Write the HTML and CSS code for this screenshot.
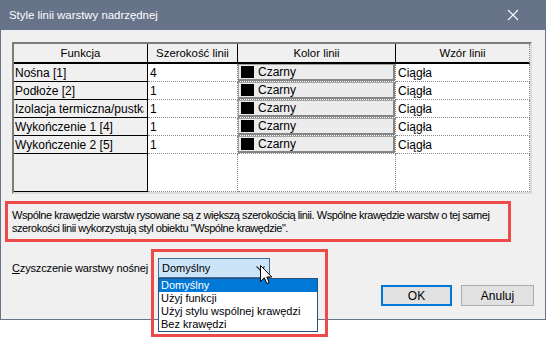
FILE: index.html
```html
<!DOCTYPE html>
<html lang="pl">
<head>
    <meta charset="UTF-8">
    <title>Style linii warstwy nadrzędnej</title>
    <link rel="stylesheet" href="styles.css">
</head>
<body>
	<div class="dialog">
		<div class="titlebar">
			<span class="title">Style linii warstwy nadrzędnej</span>
			<svg class="close" width="12" height="12" viewBox="0 0 12 12"><path d="M1 1 L11 11 M11 1 L1 11" stroke="#fff" stroke-width="1.1" fill="none"/></svg>
		</div>
		<div class="content">
			<div class="frame">
				<table class="layers">
					<thead>
						<tr><th class="c1">Funkcja</th><th class="c2">Szerokość linii</th><th class="c3">Kolor linii</th><th class="c4">Wzór linii</th></tr>
					</thead>
					<tbody>
						<tr><td class="fn"><div class="cut">Nośna [1]</div></td><td>4</td><td class="color"><div class="pick"><i class="swatch"></i>Czarny</div></td><td>Ciągła</td></tr>
						<tr><td class="fn"><div class="cut">Podłoże [2]</div></td><td>1</td><td class="color"><div class="pick"><i class="swatch"></i>Czarny</div></td><td>Ciągła</td></tr>
						<tr><td class="fn"><div class="cut">Izolacja termiczna/pustka [3]</div></td><td>1</td><td class="color"><div class="pick"><i class="swatch"></i>Czarny</div></td><td>Ciągła</td></tr>
						<tr><td class="fn"><div class="cut">Wykończenie 1 [4]</div></td><td>1</td><td class="color"><div class="pick"><i class="swatch"></i>Czarny</div></td><td>Ciągła</td></tr>
						<tr><td class="fn"><div class="cut">Wykończenie 2 [5]</div></td><td>1</td><td class="color"><div class="pick"><i class="swatch"></i>Czarny</div></td><td>Ciągła</td></tr>
						<tr class="filler"><td class="fn"></td><td></td><td></td><td></td></tr>
					</tbody>
				</table>
			</div>
			<div class="note">Wspólne krawędzie warstw rysowane są z większą szerokością linii. Wspólne krawędzie warstw o tej samej<br>szerokości linii wykorzystują styl obiektu "Wspólne krawędzie".</div>
			<div class="cleanup">
				<label><u>C</u>zyszczenie warstwy nośnej</label>
				<div class="combo">
					<div class="combo-box">
						<span>Domyślny</span>
						<svg class="chevron" width="9" height="6" viewBox="0 0 9 6"><path d="M0.5 0.5 L4.5 4.5 L8.5 0.5" stroke="#333" stroke-width="1.2" fill="none"/></svg>
					</div>
					<ul class="combo-list">
						<li class="active">Domyślny</li>
						<li>Użyj funkcji</li>
						<li>Użyj stylu wspólnej krawędzi</li>
						<li>Bez krawędzi</li>
					</ul>
					<div class="mark"></div>
					<svg class="cursor" width="13" height="20" viewBox="0 0 13 20"><path d="M0.5 0.5 L0.5 16.5 L4.3 12.8 L6.8 18.6 L9.2 17.6 L6.8 12 L11.8 12 Z" fill="#fff" stroke="#000" stroke-width="1" stroke-linejoin="miter"/></svg>
				</div>
			</div>
			<div class="actions">
				<button class="btn default">OK</button>
				<button class="btn">Anuluj</button>
			</div>
		</div>
	</div>
</body>
</html>
```

FILE: styles.css
```css
html {
	background: #fff;
}
body {
	margin: 0;
	min-height: 339px;
	background: #fff;
	font-family: "Liberation Sans", Arial, sans-serif;
	font-size: 12px;
	color: #000;
}
.dialog {
	width: 546px;
	height: 320px;
	box-sizing: border-box;
	background: #f0f0f0;
	border: 1px solid #667389;
	border-top: 0;
}
.titlebar {
	height: 30px;
	margin: 0 -1px;
	padding: 0 30px 0 9px;
	background: #667389;
	color: #fff;
	display: flex;
	align-items: center;
	justify-content: space-between;
}
.title {
	font-size: 11.4px;
}
.close {
	margin-right: -3px;
}
.content {
	padding: 12px 11px 0 11px;
}
.frame {
	width: 520px;
	height: 152px;
	box-sizing: border-box;
	border-top: 2px solid #7c7c7c;
	border-left: 2px solid #7c7c7c;
	border-right: 2px solid #dcdcdc;
	border-bottom: 2px solid #dcdcdc;
	background: #fff;
}
.layers {
	width: 516px;
	table-layout: fixed;
	border-collapse: separate;
	border-spacing: 0;
}
.layers th,
.layers td {
	box-sizing: border-box;
	padding: 0 2px;
	white-space: nowrap;
	overflow: hidden;
	text-align: left;
}
.layers th {
	height: 20px;
	font-size: 11.4px;
	font-weight: normal;
	text-align: center;
	background: #f0f0f0;
	border-right: 1px solid #000;
	border-bottom: 2px solid #000;
}
.layers th.c4 {
	border-right: 1px dotted #8a8a8a;
}
.c1 { width: 134px; }
.c2 { width: 90px; }
.c3 { width: 158px; }
.c4 { width: 134px; }
.layers td {
	height: 18px;
	background: #fff;
	border-right: 1px dotted #8a8a8a;
	border-bottom: 1px dotted #8a8a8a;
}
.layers td.fn {
	padding: 0 0 0 1px;
	background: #f0f0f0;
	border-right: 1px solid #000;
	border-bottom: 1px solid #000;
}
.cut {
	width: 129px;
	overflow: hidden;
}
.layers td.color {
	padding: 0;
}
.layers .filler td {
	height: 38px;
}
.pick {
	height: 17px;
	box-sizing: border-box;
	display: flex;
	align-items: center;
	padding-left: 2px;
	background: #ececec;
	border: 1px solid #a3a3a3;
	border-right: 2px solid #858585;
	border-bottom: 2px solid #858585;
}
.swatch {
	width: 13px;
	height: 12px;
	background: #000;
	margin-right: 4px;
}
.note {
	width: 506px;
	margin: 7px 0 0 -7px;
	box-sizing: border-box;
	padding: 5px 4px 4px 4px;
	border: 3px solid #ef4a4a;
	font-size: 11px;
	letter-spacing: -0.45px;
	line-height: 13px;
	white-space: nowrap;
}
.cleanup {
	display: flex;
	align-items: center;
	height: 20px;
	margin-top: 16px;
}
.cleanup label {
	width: 146px;
	font-size: 11px;
	letter-spacing: -0.15px;
	white-space: nowrap;
}
.combo {
	position: relative;
	width: 112px;
	font-size: 11px;
}
.combo-box {
	height: 20px;
	box-sizing: border-box;
	display: flex;
	align-items: center;
	justify-content: space-between;
	padding: 0 4px 0 3px;
	background: #cce4f7;
	border: 1px solid #3f6f9c;
}
.chevron {
	margin-top: 1px;
}
.combo-list {
	position: absolute;
	top: 20px;
	left: 0;
	width: 160px;
	box-sizing: border-box;
	margin: 0;
	padding: 0;
	list-style: none;
	background: #fff;
	border: 1px solid #2d4f76;
}
.combo-list li {
	height: 13px;
	line-height: 13px;
	padding-left: 2px;
	white-space: nowrap;
}
.combo-list li.active {
	background: #0078d7;
	color: #fff;
}
.mark {
	position: absolute;
	left: -7px;
	top: -9px;
	width: 177px;
	height: 88px;
	box-sizing: border-box;
	border: 3px solid #ef4a4a;
}
.cursor {
	position: absolute;
	left: 102px;
	top: 7px;
}
.actions {
	display: flex;
	justify-content: flex-end;
	gap: 9px;
	margin-top: 7px;
}
.btn {
	height: 21px;
	width: 73px;
	box-sizing: border-box;
	font-family: inherit;
	font-size: 12px;
	color: #000;
	background: #e1e1e1;
	border: 1px solid #adadad;
	padding: 0;
}
.btn.default {
	width: 71px;
	border: 2px solid #0078d7;
}
```
